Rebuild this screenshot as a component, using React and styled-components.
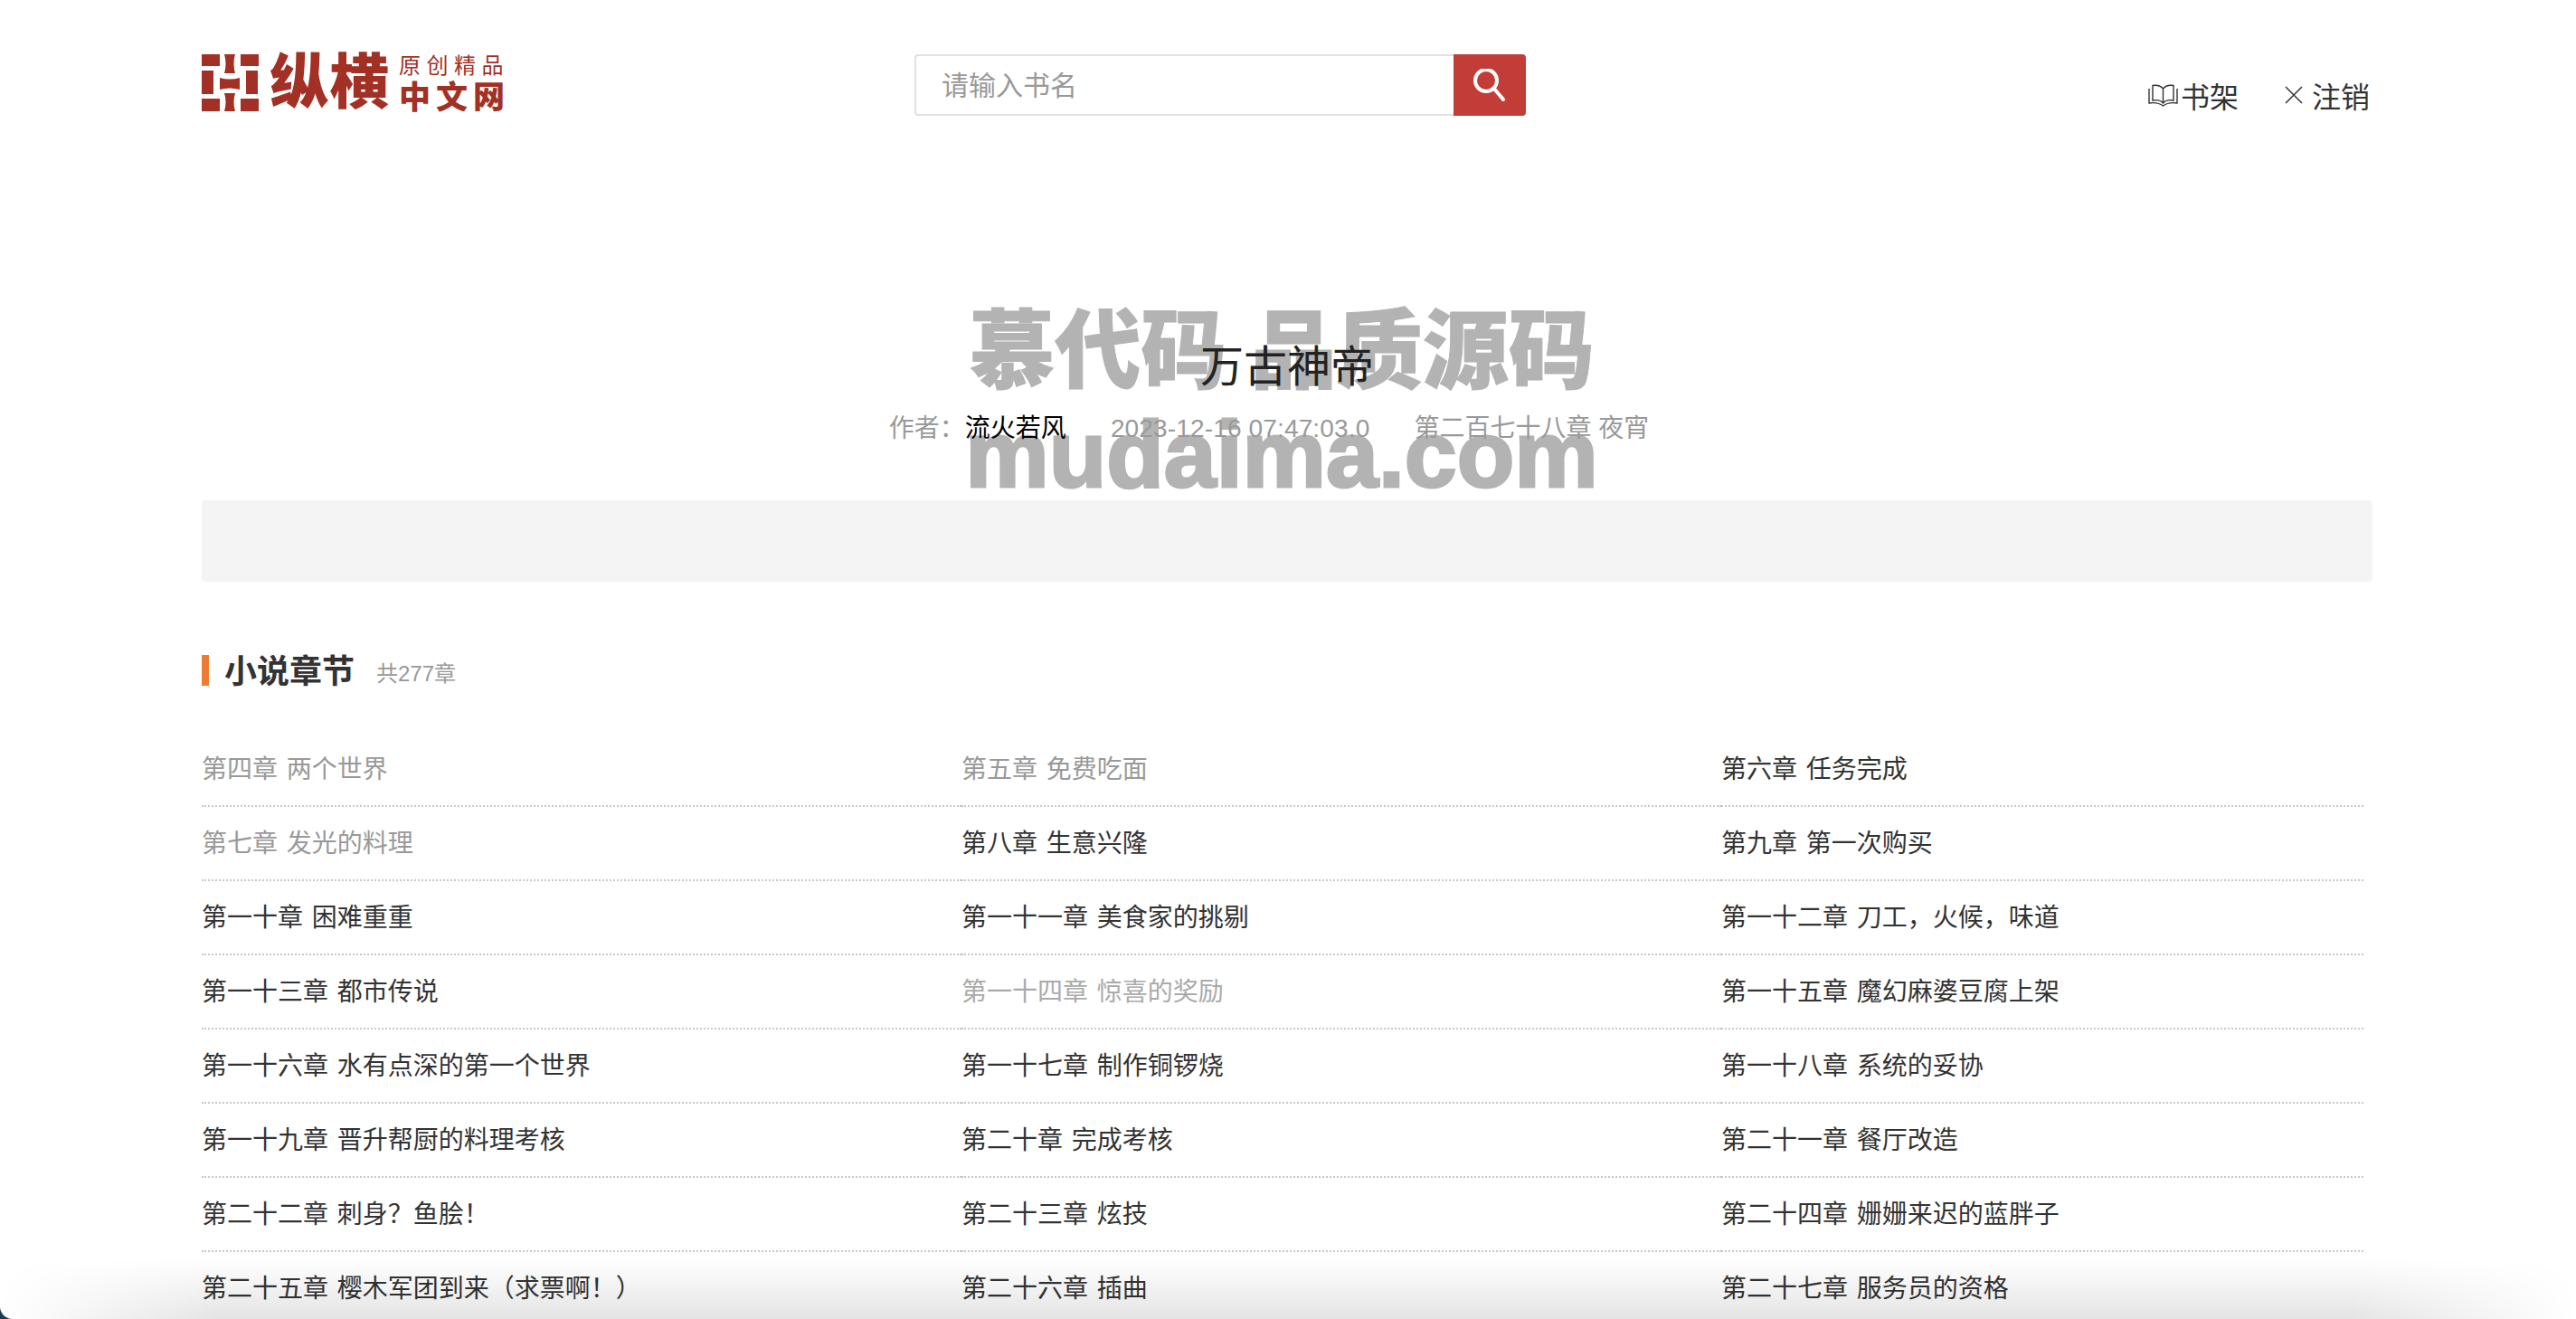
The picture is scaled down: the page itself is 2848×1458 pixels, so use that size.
import React from "react";
import styled, { createGlobalStyle } from "styled-components";

const chapters = [
  { text: "第四章 两个世界", tone: "read" },
  { text: "第五章 免费吃面", tone: "read" },
  { text: "第六章 任务完成" },
  { text: "第七章 发光的料理", tone: "read" },
  { text: "第八章 生意兴隆" },
  { text: "第九章 第一次购买" },
  { text: "第一十章 困难重重" },
  { text: "第一十一章 美食家的挑剔" },
  { text: "第一十二章 刀工，火候，味道" },
  { text: "第一十三章 都市传说" },
  { text: "第一十四章 惊喜的奖励", tone: "faded" },
  { text: "第一十五章 魔幻麻婆豆腐上架" },
  { text: "第一十六章 水有点深的第一个世界" },
  { text: "第一十七章 制作铜锣烧" },
  { text: "第一十八章 系统的妥协" },
  { text: "第一十九章 晋升帮厨的料理考核" },
  { text: "第二十章 完成考核" },
  { text: "第二十一章 餐厅改造" },
  { text: "第二十二章 刺身？鱼脍！" },
  { text: "第二十三章 炫技" },
  { text: "第二十四章 姗姗来迟的蓝胖子" },
  { text: "第二十五章 樱木军团到来（求票啊！）" },
  { text: "第二十六章 插曲" },
  { text: "第二十七章 服务员的资格" },
];

const toneColors = { read: "#999", faded: "#aaa" };

const App = () => {
  return (
    <>
      <GlobalStyle />
      <Page>
        <Header>
          <Logo>
            <LogoMark viewBox="0 0 63 63">
              <rect x="0" y="0" width="20" height="13" />
              <path d="M25 0H37Q34 10 37 21H25Q28 10 25 0Z" />
              <rect x="43" y="0" width="20" height="13" />
              <rect x="0" y="18" width="13" height="26" />
              <path d="M20 26Q31 29 42 26V39Q31 36 20 39Z" />
              <rect x="49" y="18" width="13" height="26" />
              <rect x="0" y="49" width="20" height="14" />
              <path d="M25 43H37Q34 53 37 63H25Q28 53 25 43Z" />
              <rect x="43" y="49" width="20" height="14" />
            </LogoMark>
            <LogoName>纵横</LogoName>
            <LogoSide>
              <LogoSlogan>原创精品</LogoSlogan>
              <LogoSite>中文网</LogoSite>
            </LogoSide>
          </Logo>
          <SearchForm>
            <SearchInput placeholder="请输入书名" />
            <SearchButton type="button">
              <svg width="36" height="36" viewBox="0 0 36 36" fill="none" stroke="#fff" strokeWidth="4" strokeLinecap="round">
                <circle cx="14" cy="13" r="12" />
                <path d="M22.5 21.5L33 34" />
              </svg>
            </SearchButton>
          </SearchForm>
          <Nav>
            <NavLink $gap={3}>
              <svg width="33" height="25" viewBox="0 0 33 25" fill="none" stroke="#333" strokeWidth="1.4">
                <path d="M16.5 5C14 2 9 0.8 5 1.5V18C9 17.3 14 18 16.5 21C19 18 24 17.3 28 18V1.5C24 0.8 19 2 16.5 5V21" />
                <path d="M1 5V21C7 20 12.5 21 16.5 24C20.5 21 26 20 32 21V5" />
              </svg>
              书架
            </NavLink>
            <NavLink $gap={10}>
              <svg width="20" height="20" viewBox="0 0 20 20" fill="none" stroke="#333" strokeWidth="1.5">
                <path d="M1 1L19 19M19 1L1 19" />
              </svg>
              注销
            </NavLink>
          </Nav>
        </Header>

        <Hero>
          <Watermark>
            <WatermarkCn>慕代码 品质源码</WatermarkCn>
            <WatermarkEn>mudaima.com</WatermarkEn>
          </Watermark>
          <BookTitle>万古神帝</BookTitle>
          <BookMeta>
            <span>
              作者：<Author>流火若风</Author>
            </span>
            <BookDate>2023-12-16 07:47:03.0</BookDate>
            <span>第二百七十八章 夜宵</span>
          </BookMeta>
          <BlankPanel />
        </Hero>

        <SectionHead>
          <SectionTitle>小说章节</SectionTitle>
          <SectionCount>共277章</SectionCount>
        </SectionHead>

        <ChapterList>
          {chapters.map((c) => (
            <ChapterItem key={c.text} $tone={c.tone}>
              {c.text}
            </ChapterItem>
          ))}
        </ChapterList>

        <WindowShade />
        <WindowCorner />
      </Page>
    </>
  );
};

const GlobalStyle = createGlobalStyle`
  html, body {
    margin: 0;
    padding: 0;
    background: #fff;
    overflow: hidden;
  }
  body {
    font-family: "Liberation Sans", "Noto Sans CJK SC", sans-serif;
    color: #333;
  }
`;
const Page = styled.div`
  position: relative;
  width: 2848px;
  height: 1458px;
  padding-left: 223px;
  box-sizing: border-box;
  overflow: hidden;
  background: #fff;
`;
const Header = styled.header`
  display: flex;
  align-items: flex-start;
  width: 2400px;
  height: 128px;
  padding-top: 60px;
  box-sizing: border-box;
`;
const Logo = styled.div`
  display: flex;
  width: 335px;
  height: 63px;
  color: #a33024;
`;
const LogoMark = styled.svg`
  width: 63px;
  height: 63px;
  flex: none;
  fill: #a33024;
`;
const LogoName = styled.div`
  margin-left: 12px;
  font-size: 66px;
  line-height: 63px;
  font-weight: 900;
  white-space: nowrap;
`;
const LogoSide = styled.div`
  display: flex;
  flex-direction: column;
  margin-left: 11px;
`;
const LogoSlogan = styled.div`
  height: 30px;
  font-size: 24px;
  line-height: 26px;
  letter-spacing: 6.5px;
  white-space: nowrap;
`;
const LogoSite = styled.div`
  height: 33px;
  font-size: 35px;
  line-height: 35px;
  font-weight: 900;
  letter-spacing: 6px;
  white-space: nowrap;
`;
const SearchForm = styled.form`
  display: flex;
  width: 676px;
  height: 68px;
  margin: 0 0 0 453px;
`;
const SearchInput = styled.input`
  flex: 1;
  min-width: 0;
  height: 100%;
  padding: 2px 0 0 28px;
  box-sizing: border-box;
  border: 2px solid #e1e1e1;
  border-right: none;
  border-radius: 4px 0 0 4px;
  font-family: inherit;
  font-size: 30px;
  color: #333;

  &::placeholder {
    color: #999;
  }
  &:focus {
    outline: none;
  }
`;
const SearchButton = styled.button`
  display: flex;
  align-items: center;
  justify-content: center;
  width: 80px;
  height: 100%;
  padding: 0;
  border: none;
  border-radius: 0 4px 4px 0;
  background: #c23d38;
`;
const Nav = styled.nav`
  display: flex;
  gap: 51px;
  margin-left: auto;
  margin-top: 25px;
  padding-right: 3px;
`;
const NavLink = styled.a`
  display: flex;
  align-items: center;
  gap: ${(p) => p.$gap}px;
  height: 40px;
  font-size: 32px;
  color: #333;

  & > svg {
    flex: none;
  }
`;
const Hero = styled.section`
  position: relative;
  width: 2400px;
  padding-top: 248px;
  text-align: center;
`;
const Watermark = styled.div`
  position: absolute;
  top: 206px;
  left: 824px;
  width: 740px;
  text-align: center;
  color: #b3b3b3;
  font-weight: 900;
  white-space: nowrap;
  -webkit-text-stroke: 1px #b3b3b3;
`;
const WatermarkCn = styled.div`
  font-size: 95px;
  line-height: 110px;
`;
const WatermarkEn = styled.div`
  margin-top: 3px;
  font-size: 104px;
  line-height: 110px;
  font-weight: 700;
  -webkit-text-stroke: 3px #b3b3b3;
`;
const BookTitle = styled.h1`
  position: relative;
  margin: 0;
  font-size: 48px;
  line-height: 60px;
  font-weight: 400;
  color: #222;
`;
const BookMeta = styled.div`
  position: relative;
  display: flex;
  justify-content: center;
  gap: 49px;
  margin-top: 18px;
  padding-right: 40px;
  font-size: 28px;
  line-height: 40px;
  color: #999;
`;
const BookDate = styled.span`
  letter-spacing: 0.15px;
`;
const Author = styled.span`
  color: #000;
`;
const BlankPanel = styled.div`
  height: 90px;
  margin-top: 59px;
  border-radius: 4px;
  background: #f4f4f4;
`;
const SectionHead = styled.div`
  display: flex;
  align-items: flex-end;
  height: 34px;
  margin-top: 81px;
  padding-left: 17px;
  border-left: 8px solid #f07b30;
`;
const SectionTitle = styled.h2`
  margin: 0;
  font-size: 36px;
  line-height: 34px;
  font-weight: 700;
  color: #333;
  transform: translateY(2px);
`;
const SectionCount = styled.span`
  margin-left: 24px;
  font-size: 24px;
  line-height: 26px;
  color: #999;
`;
const ChapterList = styled.ul`
  display: grid;
  grid-template-columns: 840px 840px 710px;
  margin: 52px 0 0;
  padding: 0;
  list-style: none;
`;
const ChapterItem = styled.li`
  height: 80px;
  border-bottom: 2px dotted #c8c8c8;
  font-size: 28px;
  line-height: 82px;
  word-spacing: 2px;
  white-space: nowrap;
  color: ${(p) => toneColors[p.$tone] || "#333"};
`;
const WindowShade = styled.div`
  position: absolute;
  left: 0;
  right: 0;
  bottom: 0;
  height: 66px;
  pointer-events: none;
  background: linear-gradient(to bottom, rgba(0, 0, 0, 0), rgba(0, 0, 0, 0.105));
  mask-image: linear-gradient(to right, transparent 0, #000 240px, #000 2600px, transparent 2848px);
`;
const WindowCorner = styled.div`
  position: absolute;
  left: 0;
  bottom: 0;
  width: 14px;
  height: 14px;
  pointer-events: none;
  background: radial-gradient(circle at 100% 0, transparent 13.5px, #1a3a55 14.5px);
`;

export default App;
